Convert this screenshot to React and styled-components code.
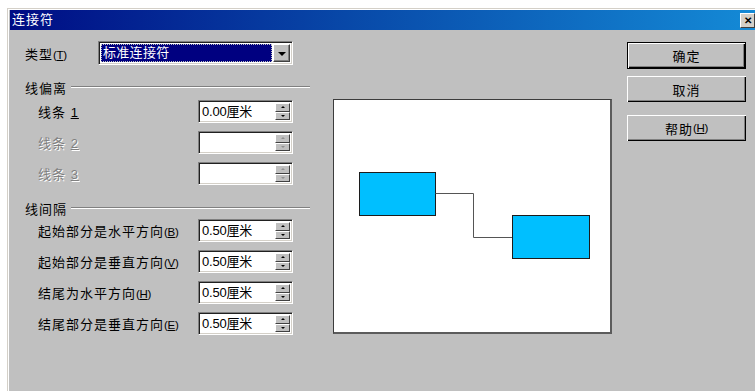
import React from "react";
import styled, { createGlobalStyle } from "styled-components";

const GlobalStyle = createGlobalStyle`
  html, body {
    margin: 0;
    padding: 0;
    height: 100%;
    background: #ffffff;
    overflow: hidden;
  }
  body {
    font-family: "Liberation Sans", "Noto Sans CJK SC", sans-serif;
    font-size: 13px;
    color: #000;
  }
`;

const App = () => {
  return (
    <>
      <GlobalStyle />
      <Window>
        <TitleBar>
          <Title>连接符</Title>
          <CloseButton>✕</CloseButton>
        </TitleBar>

        <Body>
          <LeftCol>
            <TypeRow>
              <Label>
                类型<Mnemonic>(<u>T</u>)</Mnemonic>
              </Label>
              <Combo>
                <ComboValue>标准连接符</ComboValue>
                <DropButton>
                  <ArrowDown />
                </DropButton>
              </Combo>
            </TypeRow>

            <SectionHead top={12}>
              <span>线偏离</span>
              <Rule />
            </SectionHead>

            <Fields top={3}>
              <FieldRow>
                <FieldLabel>
                  线条 <u>1</u>
                </FieldLabel>
                <Spin value="0.00厘米" />
              </FieldRow>
              <FieldRow>
                <FieldLabel disabled>
                  线条 <u>2</u>
                </FieldLabel>
                <Spin disabled />
              </FieldRow>
              <FieldRow>
                <FieldLabel disabled>
                  线条 <u>3</u>
                </FieldLabel>
                <Spin disabled />
              </FieldRow>
            </Fields>

            <SectionHead top={13}>
              <span>线间隔</span>
              <Rule />
            </SectionHead>

            <Fields top={1}>
              <FieldRow>
                <FieldLabel>
                  起始部分是水平方向<Mnemonic>(<u>B</u>)</Mnemonic>
                </FieldLabel>
                <Spin value="0.50厘米" />
              </FieldRow>
              <FieldRow>
                <FieldLabel>
                  起始部分是垂直方向<Mnemonic>(<u>V</u>)</Mnemonic>
                </FieldLabel>
                <Spin value="0.50厘米" />
              </FieldRow>
              <FieldRow>
                <FieldLabel>
                  结尾为水平方向<Mnemonic>(<u>H</u>)</Mnemonic>
                </FieldLabel>
                <Spin value="0.50厘米" />
              </FieldRow>
              <FieldRow>
                <FieldLabel>
                  结尾部分是垂直方向<Mnemonic>(<u>E</u>)</Mnemonic>
                </FieldLabel>
                <Spin value="0.50厘米" />
              </FieldRow>
            </Fields>
          </LeftCol>

          <Preview>
            <svg width="276" height="232" viewBox="0 0 276 232">
              <rect
                x="25.5"
                y="72.5"
                width="76"
                height="43"
                fill="#00bfff"
                stroke="#1c1c1c"
              />
              <polyline
                points="101.5,93.5 139.5,93.5 139.5,137.5 178.5,137.5"
                fill="none"
                stroke="#555"
              />
              <rect
                x="178.5"
                y="115.5"
                width="77"
                height="43"
                fill="#00bfff"
                stroke="#1c1c1c"
              />
            </svg>
          </Preview>

          <Buttons>
            <Button isDefault>确定</Button>
            <Button top={7}>取消</Button>
            <Button top={13}>
              帮助<Mnemonic>(<u>H</u>)</Mnemonic>
            </Button>
          </Buttons>
        </Body>
      </Window>
    </>
  );
};

const Spin = ({ value, disabled }) => (
  <SpinBox>
    <SpinText>{value}</SpinText>
    <SpinButtons>
      <SpinHalf>
        <ArrowUp disabled={disabled} />
      </SpinHalf>
      <SpinHalf>
        <ArrowSmallDown disabled={disabled} />
      </SpinHalf>
    </SpinButtons>
  </SpinBox>
);

export default App;

const Window = styled.div`
  margin: 8px 0 0 7px;
  height: calc(100vh - 8px);
  box-sizing: border-box;
  border-top: 1px solid #d4d0c8;
  border-left: 1px solid #d4d0c8;
  box-shadow: inset 1px 1px 0 #ffffff;
  padding: 1px 0 0 2px;
  background: #c0c0c0;
  display: flex;
  flex-direction: column;
`;

const TitleBar = styled.div`
  height: 20px;
  display: flex;
  align-items: center;
  background: linear-gradient(90deg, #000c84 0%, #0848a8 45%, #148ad6 100%);
  color: #fff;
  padding-left: 2px;
`;

const Title = styled.div`
  font-size: 13px;
  letter-spacing: 1px;
  line-height: 20px;
`;

const CloseButton = styled.div`
  margin-left: auto;
  width: 15px;
  height: 15px;
  box-sizing: border-box;
  background: #d4d0c8;
  border-top: 1px solid #fff;
  border-left: 1px solid #fff;
  border-right: 1px solid #404040;
  border-bottom: 1px solid #404040;
  color: #000;
  font-size: 10px;
  font-weight: bold;
  line-height: 13px;
  text-align: center;
`;

const Body = styled.div`
  flex: 1;
  display: flex;
  align-items: flex-start;
  padding-left: 15px;
`;

const LeftCol = styled.div`
  width: 285px;
  padding-top: 11px;
  display: flex;
  flex-direction: column;
`;

const TypeRow = styled.div`
  height: 24px;
  display: flex;
  align-items: center;
`;

const Label = styled.div`
  width: 73px;
  white-space: nowrap;
  letter-spacing: 1px;
`;

const Mnemonic = styled.span`
  font-size: 11.5px;
  letter-spacing: -0.3px;
  u {
    text-underline-offset: 1px;
  }
`;

const Combo = styled.div`
  width: 195px;
  height: 24px;
  box-sizing: border-box;
  display: flex;
  align-items: stretch;
  background: #fff;
  border-top: 1px solid #808080;
  border-left: 1px solid #808080;
  border-right: 1px solid #fff;
  border-bottom: 1px solid #fff;
  box-shadow: inset 1px 1px 0 #202020, inset -1px -1px 0 #d4d0c8;
  padding: 2px;
`;

const ComboValue = styled.div`
  flex: 1;
  background: #000080;
  color: #fff;
  outline: 1px dotted #c0c0c0;
  outline-offset: -1px;
  padding-left: 2px;
  line-height: 18px;
  margin-right: 1px;
  letter-spacing: 0.3px;
`;

const DropButton = styled.div`
  width: 17px;
  box-sizing: border-box;
  background: #c0c0c0;
  border-top: 1px solid #fff;
  border-left: 1px solid #fff;
  border-right: 1px solid #404040;
  border-bottom: 1px solid #404040;
  box-shadow: inset -1px -1px 0 #808080;
  display: flex;
  align-items: center;
  justify-content: center;
`;

const ArrowDown = styled.div`
  width: 0;
  height: 0;
  border-left: 4px solid transparent;
  border-right: 4px solid transparent;
  border-top: 4px solid #000;
  margin-top: 1px;
`;

const SectionHead = styled.div`
  margin-top: ${(p) => p.top}px;
  height: 20px;
  display: flex;
  align-items: center;
  gap: 4px;
  white-space: nowrap;
  letter-spacing: 1px;
`;

const Rule = styled.div`
  flex: 1;
  height: 0;
  border-top: 1px solid #808080;
  border-bottom: 1px solid #ffffff;
`;

const Fields = styled.div`
  margin-top: ${(p) => p.top}px;
  width: 268px;
  display: flex;
  flex-direction: column;
  gap: 8px;
`;

const FieldRow = styled.div`
  height: 23px;
  display: flex;
  align-items: center;
  justify-content: space-between;
`;

const FieldLabel = styled.div`
  padding-left: 13px;
  white-space: nowrap;
  letter-spacing: 1px;
  color: ${(p) => (p.disabled ? "#808080" : "#000")};
  text-shadow: ${(p) => (p.disabled ? "1px 1px 0 #ffffff" : "none")};
`;

const SpinBox = styled.div`
  width: 95px;
  height: 23px;
  box-sizing: border-box;
  display: flex;
  background: #fff;
  border-top: 1px solid #808080;
  border-left: 1px solid #808080;
  border-right: 1px solid #fff;
  border-bottom: 1px solid #fff;
  box-shadow: inset 1px 1px 0 #202020, inset -1px -1px 0 #d4d0c8;
  padding: 2px 2px 2px 2px;
`;

const SpinText = styled.div`
  flex: 1;
  line-height: 17px;
  padding-left: 1px;
  letter-spacing: -0.2px;
`;

const SpinButtons = styled.div`
  width: 15px;
  display: flex;
  flex-direction: column;
`;

const SpinHalf = styled.div`
  flex: 1;
  box-sizing: border-box;
  background: #c0c0c0;
  border-top: 1px solid #fff;
  border-left: 1px solid #fff;
  border-right: 1px solid #404040;
  border-bottom: 1px solid #404040;
  display: flex;
  align-items: center;
  justify-content: center;
`;

const ArrowUp = styled.div`
  width: 0;
  height: 0;
  border-left: 2px solid transparent;
  border-right: 2px solid transparent;
  border-bottom: 2px solid ${(p) => (p.disabled ? "#909090" : "#000")};
`;

const ArrowSmallDown = styled.div`
  width: 0;
  height: 0;
  border-left: 2px solid transparent;
  border-right: 2px solid transparent;
  border-top: 2px solid ${(p) => (p.disabled ? "#909090" : "#000")};
`;

const Preview = styled.div`
  margin-top: 69px;
  margin-left: 23px;
  width: 279px;
  height: 235px;
  box-sizing: border-box;
  background: #fff;
  border-top: 1px solid #3c3c3c;
  border-left: 1px solid #3c3c3c;
  border-right: 2px solid #5c5c5c;
  border-bottom: 2px solid #5c5c5c;
  svg {
    display: block;
  }
`;

const Buttons = styled.div`
  margin-top: 12px;
  margin-left: 15px;
  display: flex;
  flex-direction: column;
`;

const Button = styled.div`
  margin-top: ${(p) => p.top || 0}px;
  width: 119px;
  height: ${(p) => (p.isDefault ? 27 : 26)}px;
  box-sizing: border-box;
  display: flex;
  align-items: center;
  justify-content: center;
  background: #c0c0c0;
  border: ${(p) => (p.isDefault ? "1px solid #000" : "none")};
  box-shadow: inset 1px 1px 0 #ffffff, inset -1px -1px 0 #000000,
    inset -2px -2px 0 #808080;
  letter-spacing: 1px;
`;
